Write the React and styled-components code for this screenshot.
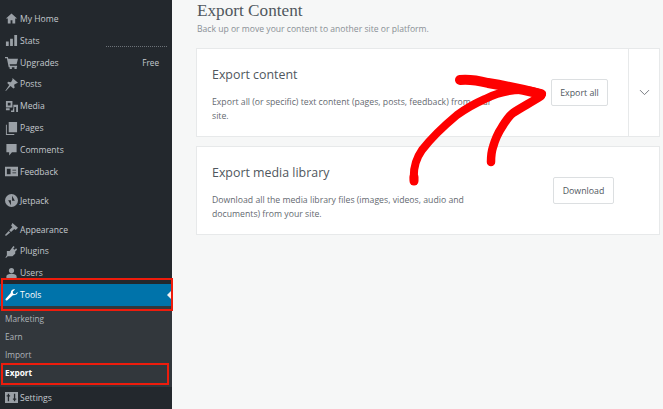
import React from 'react';
import styled, { createGlobalStyle } from 'styled-components';
import { ChevronDown } from 'lucide-react';

const Global = createGlobalStyle`
  html, body { margin: 0; padding: 0; height: 100%; overflow: hidden; }
  #root { height: 100%; }
  body { font-family: "Open Sans", "Noto Sans", sans-serif; background: #f6f7f7; }
`;

const Page = styled.div`
  position: relative;
  display: flex;
  width: 663px;
  height: 409px;
  overflow: hidden;
`;

const Sidebar = styled.nav`
  width: 172px;
  height: 409px;
  flex: none;
  padding-top: 8px;
  box-sizing: border-box;
  background: #23282d;
  display: flex;
  flex-direction: column;
  overflow: hidden;
`;

const Row = styled.div`
  position: relative;
  height: 21.85px;
  flex: none;
  display: flex;
  align-items: center;
  padding: 0 13px 0 3px;
  font-size: 8.6px;
  color: ${p => (p.$active ? '#ffffff' : '#c3c8cd')};
  background: ${p => (p.$active ? '#0073aa' : 'transparent')};
  margin-top: ${p => p.$gap || 0}px;
`;

const IconSlot = styled.span`
  width: 17px;
  height: 14px;
  flex: none;
  display: flex;
  align-items: center;
  justify-content: center;
  color: ${p => (p.$active ? '#ffffff' : '#9aa0a6')};
`;

const Label = styled.span`
  flex: 1;
`;

const Free = styled.span`
  font-size: 8.2px;
  color: #c3c8cd;
`;

const Rule = styled.span`
  position: absolute;
  top: -6px;
  left: 106px;
  width: 61px;
  border-top: 1px dotted #6c7278;
`;

const Notch = styled.span`
  position: absolute;
  right: 0;
  top: 6px;
  width: 0;
  height: 0;
  border: 5px solid transparent;
  border-right-color: #f1f1f1;
  border-left-width: 0;
`;

const Submenu = styled.div`
  padding: 4px 0 5px;
  background: #32373c;
  display: flex;
  flex-direction: column;
`;

const SubItem = styled.div`
  height: 18px;
  display: flex;
  align-items: center;
  padding-left: 5px;
  font-size: 8.3px;
  font-weight: ${p => (p.$current ? 700 : 400)};
  color: ${p => (p.$current ? '#ffffff' : '#aeb4b9')};
`;

const Main = styled.main`
  flex: 1;
  padding: 0 3px 0 24px;
  display: flex;
  flex-direction: column;
  min-width: 0;
`;

const Title = styled.h1`
  margin: 0;
  padding-left: 1px;
  height: 21px;
  font-family: "Liberation Serif", serif;
  font-weight: 400;
  font-size: 17.2px;
  line-height: 20px;
  padding-top: 1px;
  box-sizing: border-box;
  color: #50575e;
`;

const Subtitle = styled.p`
  margin: 0;
  height: 27px;
  padding: 2px 0 0 1px;
  box-sizing: border-box;
  font-size: 8.6px;
  line-height: 13px;
  color: #8a9096;
`;

const Card = styled.section`
  height: 89px;
  box-sizing: border-box;
  margin-bottom: 9px;
  background: #ffffff;
  border: 1px solid #e7e9ea;
  display: flex;
  align-items: stretch;
`;

const CardBody = styled.div`
  flex: 1;
  min-width: 0;
  padding: 17px 0 0 15px;
`;

const CardHead = styled.h2`
  margin: 0 0 12px;
  font-weight: 400;
  font-size: 12.4px;
  line-height: 17px;
  color: #50575e;
`;

const CardText = styled.p`
  margin: 0;
  width: ${p => p.$w}px;
  font-size: 8.7px;
  line-height: 14px;
  color: #646970;
`;

const CardAction = styled.div`
  flex: none;
  width: ${p => p.$w}px;
  display: flex;
  align-items: center;
`;

const Button = styled.button`
  width: ${p => p.$w}px;
  height: 27px;
  padding: 0;
  background: #fff;
  border: 1px solid #dcdfe1;
  border-radius: 2px;
  font-family: inherit;
  font-size: 8.8px;
  color: #50575e;
`;

const Expand = styled.div`
  flex: none;
  width: 30px;
  border-left: 1px solid #e7e9ea;
  display: flex;
  align-items: center;
  justify-content: center;
  color: #787c82;
`;

const RedBox = styled.div`
  position: absolute;
  left: ${p => p.$x}px;
  top: ${p => p.$y}px;
  width: ${p => p.$w}px;
  height: ${p => p.$h}px;
  box-sizing: border-box;
  border: 2.5px solid #ee1c0c;
`;

const Arrow = styled.svg`
  position: absolute;
  left: 0;
  top: 0;
  pointer-events: none;
`;

const icons = {
  home: <path d="M7 1.500 1 7h2v5.500h3V9h2v3.500h3V7h2z" />,
  stats: <path d="M1 8h3v5H1zM5.500 5h3v8h-3zM10 1h3v12h-3z" />,
  cart: <path d="M0 1h3l.6 2H14l-1.500 6H5l.4 1.500H13V12H4L2 2.500H0zM5 12.200h2.400V14H5zM10.200 12.200h2.400V14h-2.400z" />,
  pin: <path d="M8 0l6 5-2 1-2.200 1.400.6 3-1.400 1L6 8.600 1 14l-.6-.4L4.600 7.600 2.400 5.300l1-1.200 3 .5L8 2z" />,
  media: <path d="M1 1h7v7H1zM3 3v3h3V3zM9 5h5v8h-2V7.500H10V13H6.500v-1.800H8.500V9.500H9zM1 9h4v2H1z" />,
  pages: <path d="M4 0h9v11H4zM2 3v10h8v1H1V3z" />,
  comment: <path d="M1.500 1h11v9H7.500L4.500 13.500V10h-3z" />,
  feedback: <path fillRule="evenodd" d="M0 2h14v10H0zM2 4v6h4V4zM8 5v1h4V5zM8 8v1h4V8z" />,
  jetpack: <path fillRule="evenodd" d="M7 0a7 7 0 1 0 0 14A7 7 0 0 0 7 0zM7.600 1.800v5.600h3zM6.400 12.200V6.600h-3z" />,
  brush: <path d="M8 0l6 5-2.500 2.500L10 6.400 6.500 9.800l-2-2L8 4.400 6.600 3zM4 8.600l1.600 1.600L1 14l-1-1z" />,
  plug: <path d="M9 1l1.400 1.200L8.800 4l1.400 1.200 1.800-1.600L13 5l-2 2v2.500L8 12H3L1 14l-.5-.6L2 11V6.500h3L6 5z" />,
  user: <path d="M7 1a2.800 2.800 0 1 1 0 5.600A2.800 2.800 0 0 1 7 1zM1.500 13V10c0-1.600 2.500-2.600 5.500-2.600s5.500 1 5.500 2.600v3z" />,
  wrench: <path d="M13.500 3.200 11 5.600 8.800 5 8.300 2.900 10.800.5C8.600-.3 6 1.500 6.200 4.400L.8 10.500c-.9 1 .6 2.600 1.700 1.700l6-5.500c3 .4 5.700-2 5-3.500z" />,
  sliders: <path fillRule="evenodd" d="M0 1h14v12H0zM3 3v1.500H1.800V6H3v5h1.400V6h1.100V4.500H4.400V3zM9.600 3v5H8.500v1.500h1.100V11H11V9.500h1.100V8H11V3z" />,
};

const Glyph = ({ name, active }) => (
  <IconSlot $active={active}>
    <svg width="13" height="13" viewBox="0 0 14 14" fill="currentColor">{icons[name]}</svg>
  </IconSlot>
);

const NavRow = ({ icon, children, gap, active, extra }) => (
  <Row $gap={gap} $active={active}>
    <Glyph name={icon} active={active} />
    <Label>{children}</Label>
    {extra}
  </Row>
);

export default function App() {
  return (
    <Page>
      <Global />
      <Sidebar>
        <NavRow icon="home">My Home</NavRow>
        <NavRow icon="stats">Stats</NavRow>
        <NavRow icon="cart" extra={<Free>Free</Free>}><Rule />Upgrades</NavRow>
        <NavRow icon="pin">Posts</NavRow>
        <NavRow icon="media">Media</NavRow>
        <NavRow icon="pages">Pages</NavRow>
        <NavRow icon="comment">Comments</NavRow>
        <NavRow icon="feedback">Feedback</NavRow>
        <NavRow icon="jetpack" gap={7}>Jetpack</NavRow>
        <NavRow icon="brush" gap={7}>Appearance</NavRow>
        <NavRow icon="plug">Plugins</NavRow>
        <NavRow icon="user">Users</NavRow>
        <NavRow icon="wrench" active extra={<Notch />}>Tools</NavRow>
        <Submenu>
          <SubItem>Marketing</SubItem>
          <SubItem>Earn</SubItem>
          <SubItem>Import</SubItem>
          <SubItem $current>Export</SubItem>
        </Submenu>
        <NavRow icon="sliders">Settings</NavRow>
      </Sidebar>
      <Main>
        <Title>Export Content</Title>
        <Subtitle>Back up or move your content to another site or platform.</Subtitle>
        <Card>
          <CardBody>
            <CardHead>Export content</CardHead>
            <CardText $w={285}>Export all (or specific) text content (pages, posts, feedback) from your site.</CardText>
          </CardBody>
          <CardAction $w={77}><Button $w={57}>Export all</Button></CardAction>
          <Expand><ChevronDown size={17} strokeWidth={1.4} /></Expand>
        </Card>
        <Card>
          <CardBody>
            <CardHead>Export media library</CardHead>
            <CardText $w={260}>Download all the media library files (images, videos, audio and documents) from your site.</CardText>
          </CardBody>
          <CardAction $w={106}><Button $w={61}>Download</Button></CardAction>
        </Card>
      </Main>
      <RedBox $x={1} $y={278} $w={172} $h={33} />
      <RedBox $x={1} $y={363} $w={168} $h={22} />
      <Arrow width="663" height="409" viewBox="0 0 663 409">
        <g fill="none" stroke="#fe0000" strokeLinecap="round" strokeLinejoin="round">
          <path strokeWidth="10" d="M460 80C470 79 480 81 488 83C500 85 525 90 541 94" />
          <path strokeWidth="8" d="M414 181C413 170 415 160 422 150C432 137 445 125 457 115C468 107 476 103 485 99C497 93 508 90 522 90C530 90 537 92 542 94" />
          <path strokeWidth="9" d="M414 181L414 177" />
          <path strokeWidth="8.500" d="M491 162C491 155 492 150 493 147C495 140 498 133 502 127C505 122 508 117 513 113C522 107 532 102 541 96" />
        </g>
      </Arrow>
    </Page>
  );
}
